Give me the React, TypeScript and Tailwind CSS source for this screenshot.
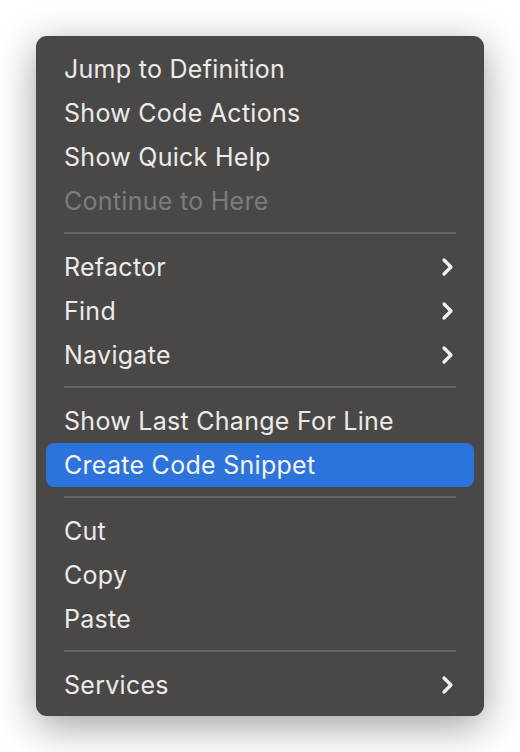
import React from "react";

type Item =
  | { kind: "item"; label: string; disabled?: boolean; sub?: boolean; active?: boolean }
  | { kind: "sep" };

const items: Item[] = [
  { kind: "item", label: "Jump to Definition" },
  { kind: "item", label: "Show Code Actions" },
  { kind: "item", label: "Show Quick Help" },
  { kind: "item", label: "Continue to Here", disabled: true },
  { kind: "sep" },
  { kind: "item", label: "Refactor", sub: true },
  { kind: "item", label: "Find", sub: true },
  { kind: "item", label: "Navigate", sub: true },
  { kind: "sep" },
  { kind: "item", label: "Show Last Change For Line" },
  { kind: "item", label: "Create Code Snippet", active: true },
  { kind: "sep" },
  { kind: "item", label: "Cut" },
  { kind: "item", label: "Copy" },
  { kind: "item", label: "Paste" },
  { kind: "sep" },
  { kind: "item", label: "Services", sub: true },
];

function Chevron() {
  return (
    <svg width="14" height="20" viewBox="0 0 14 20" className="shrink-0">
      <path
        d="M3 3 L10 10 L3 17"
        fill="none"
        stroke="#f2f2f2"
        strokeWidth="3.2"
        strokeLinecap="round"
        strokeLinejoin="round"
      />
    </svg>
  );
}

export default function App() {
  return (
    <div className="w-[520px] h-[752px] bg-white pt-[36px] pl-[36px]">
      <div
        className="w-[448px] h-[680px] bg-[#4a4846] rounded-[11px] pt-[11px] pb-[9px] flex flex-col shadow-[0_10px_40px_rgba(0,0,0,0.38)]"
        style={{ fontFamily: "Inter, 'Noto Sans', sans-serif" }}
      >
        {items.map((it, i) =>
          it.kind === "sep" ? (
            <div key={i} className="h-[22px] flex items-center mx-[28px]">
              <div className="h-[2px] w-full bg-[#696765] -translate-y-[1px]" />
            </div>
          ) : (
            <div
              key={i}
              className={
                "h-[44px] mx-[10px] pl-[18px] pr-[19px] flex items-center justify-between rounded-[8px] text-[25px] tracking-[0.28px] " +
                (it.active
                  ? "bg-[#2c74dc] text-[#f4f4f4]"
                  : it.disabled
                  ? "text-[#7e7c7a]"
                  : "text-[#ebebeb]")
              }
            >
              <span className="pt-[2px]">{it.label}</span>
              {it.sub ? <Chevron /> : null}
            </div>
          )
        )}
      </div>
    </div>
  );
}
